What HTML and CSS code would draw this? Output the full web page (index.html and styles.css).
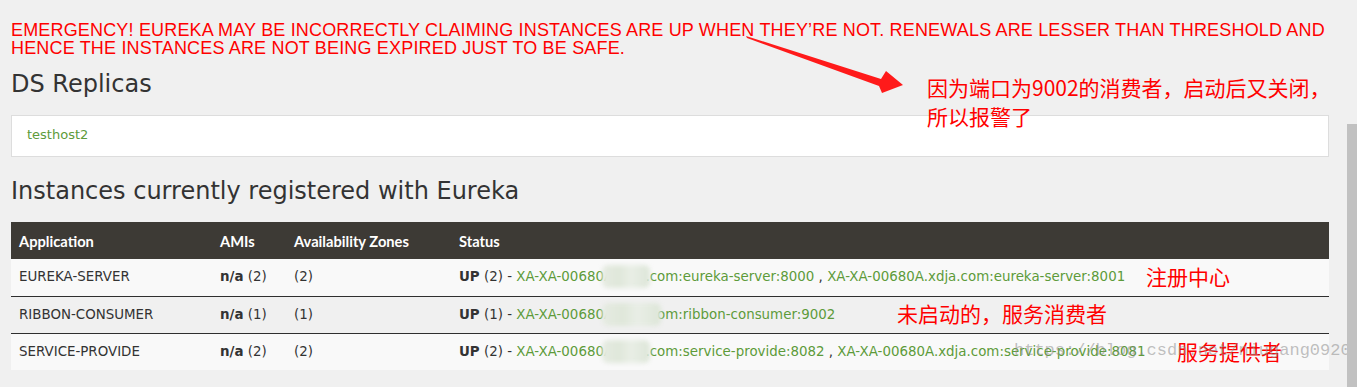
FILE: index.html
```html
<!DOCTYPE html>
<html lang="en">
<head>
    <meta charset="UTF-8">
    <title>Eureka</title>
    <link rel="stylesheet" href="styles.css">
</head>
<body>
    <div class="page">
        <h4 class="emergency">EMERGENCY! EUREKA MAY BE INCORRECTLY CLAIMING INSTANCES ARE UP WHEN THEY’RE NOT. RENEWALS ARE LESSER THAN THRESHOLD AND HENCE THE INSTANCES ARE NOT BEING EXPIRED JUST TO BE SAFE.</h4>

        <h1 class="section-title">DS Replicas</h1>
        <ul class="replicas">
            <li><a href="#">testhost2</a></li>
        </ul>

        <h1 class="section-title instances-title">Instances currently registered with Eureka</h1>
        <table class="instances">
            <colgroup>
                <col class="col-app">
                <col class="col-ami">
                <col class="col-zone">
                <col>
            </colgroup>
            <thead>
                <tr>
                    <th>Application</th>
                    <th>AMIs</th>
                    <th>Availability Zones</th>
                    <th>Status</th>
                </tr>
            </thead>
            <tbody>
                <tr>
                    <td>EUREKA-SERVER</td>
                    <td><b>n/a</b> (2)</td>
                    <td>(2)</td>
                    <td><b>UP</b> (2) - <a href="#">XA-XA-00680<span class="smudge">A.xdja</span>.com:eureka-server:8000</a> , <a href="#">XA-XA-00680A.xdja.com:eureka-server:8001</a></td>
                </tr>
                <tr>
                    <td>RIBBON-CONSUMER</td>
                    <td><b>n/a</b> (1)</td>
                    <td>(1)</td>
                    <td><b>UP</b> (1) - <a href="#">XA-XA-00680<span class="smudge">A.xdja.c</span>om:ribbon-consumer:9002</a></td>
                </tr>
                <tr>
                    <td>SERVICE-PROVIDE</td>
                    <td><b>n/a</b> (2)</td>
                    <td>(2)</td>
                    <td><b>UP</b> (2) - <a href="#">XA-XA-00680<span class="smudge">A.xdja</span>.com:service-provide:8082</a> , <a href="#">XA-XA-00680A.xdja.com:service-provide:8081</a></td>
                </tr>
            </tbody>
        </table>
    </div>

    <!-- annotations drawn over the screenshot -->
    <svg class="arrow" width="160" height="64" viewBox="0 0 160 64">
        <polygon points="0,4 135,47 140,39 157,53 136,61 133,54 1,6" fill="#ff1a1a"/>
    </svg>
    <p class="note note-main">因为端口为9002的消费者，启动后又关闭，<br>所以报警了</p>
    <p class="note note-registry">注册中心</p>
    <p class="note note-consumer">未启动的，服务消费者</p>
    <p class="note note-provider">服务提供者</p>
    <p class="watermark">https://blog.csdn.net/niugang0920</p>
    <div class="scroll-thumb"></div>
</body>
</html>
```

FILE: styles.css
```css
/* General Reset */
* {
    margin: 0;
    padding: 0;
    box-sizing: border-box;
}

body {
    background-color: #f0f0f0;
    color: #333;
    font-family: "DejaVu Sans", sans-serif;
    font-size: 13.4px;
    line-height: 20px;
}

.page {
    padding: 21px 28px 0 11px;
}

a {
    color: #5d9b3a;
    text-decoration: none;
}

/* Emergency banner */
.emergency {
    color: #ff0000;
    font-family: "Liberation Sans", sans-serif;
    font-weight: normal;
    font-size: 18px;
    letter-spacing: 0.17px;
    line-height: 18px;
}

/* Section titles */
.section-title {
    font-family: "DejaVu Sans", sans-serif;
    font-weight: normal;
    font-size: 24px;
    line-height: 30px;
    color: #333;
    margin-top: 12px;
    margin-bottom: 16px;
}

.instances-title {
    margin-top: 19px;
    margin-bottom: 16px;
}

/* Replicas box */
.replicas {
    list-style: none;
    background: #fff;
    border: 1px solid #ddd;
    padding: 9px 15px;
    height: 42px;
    font-size: 13px;
}

/* Instances table */
.instances {
    width: 100%;
    border-collapse: collapse;
}

.col-app { width: 201px; }
.col-ami { width: 74px; }
.col-zone { width: 165px; }

.instances th {
    background: #3d3a35;
    color: #fff;
    text-align: left;
    font-family: Lato, sans-serif;
    font-weight: bold;
    font-size: 14.7px;
    padding: 8px;
    height: 37px;
}

.instances td {
    padding: 8px;
    height: 37px;
    background: #f9f9f9;
    border-top: 1px solid #2f2f2f;
    white-space: nowrap;
}

.instances tbody tr:first-child td {
    border-top: none;
}

.instances tbody tr:nth-child(2) td {
    background: #f0f0f0;
}

/* blurred host name */
.smudge {
    position: relative;
}

.smudge::after {
    content: "";
    position: absolute;
    left: -2px;
    right: -4px;
    top: -4px;
    bottom: -4px;
    background: linear-gradient(90deg, #e6ebe2 0%, #dfe7da 35%, #e9eee6 60%, #dde6d8 100%);
    filter: blur(2px);
    border-radius: 6px;
}

/* Annotations */
.arrow {
    position: absolute;
    left: 746px;
    top: 32px;
}

.note {
    position: absolute;
    color: #ff0000;
    font-family: "Noto Sans CJK SC", sans-serif;
    font-size: 21px;
    line-height: 29px;
}

.note-main { left: 927px; top: 73px; }
.note-registry { left: 1146px; top: 262px; }
.note-consumer { left: 897px; top: 299px; }
.note-provider { left: 1177px; top: 337px; }

.watermark {
    position: absolute;
    left: 1014px;
    top: 341px;
    color: rgba(140, 140, 140, 0.55);
    font-family: "Liberation Mono", monospace;
    font-size: 17px;
}

.scroll-thumb {
    position: fixed;
    right: 0;
    top: 124px;
    bottom: 0;
    width: 10px;
    background: #c1c1c1;
}
```
